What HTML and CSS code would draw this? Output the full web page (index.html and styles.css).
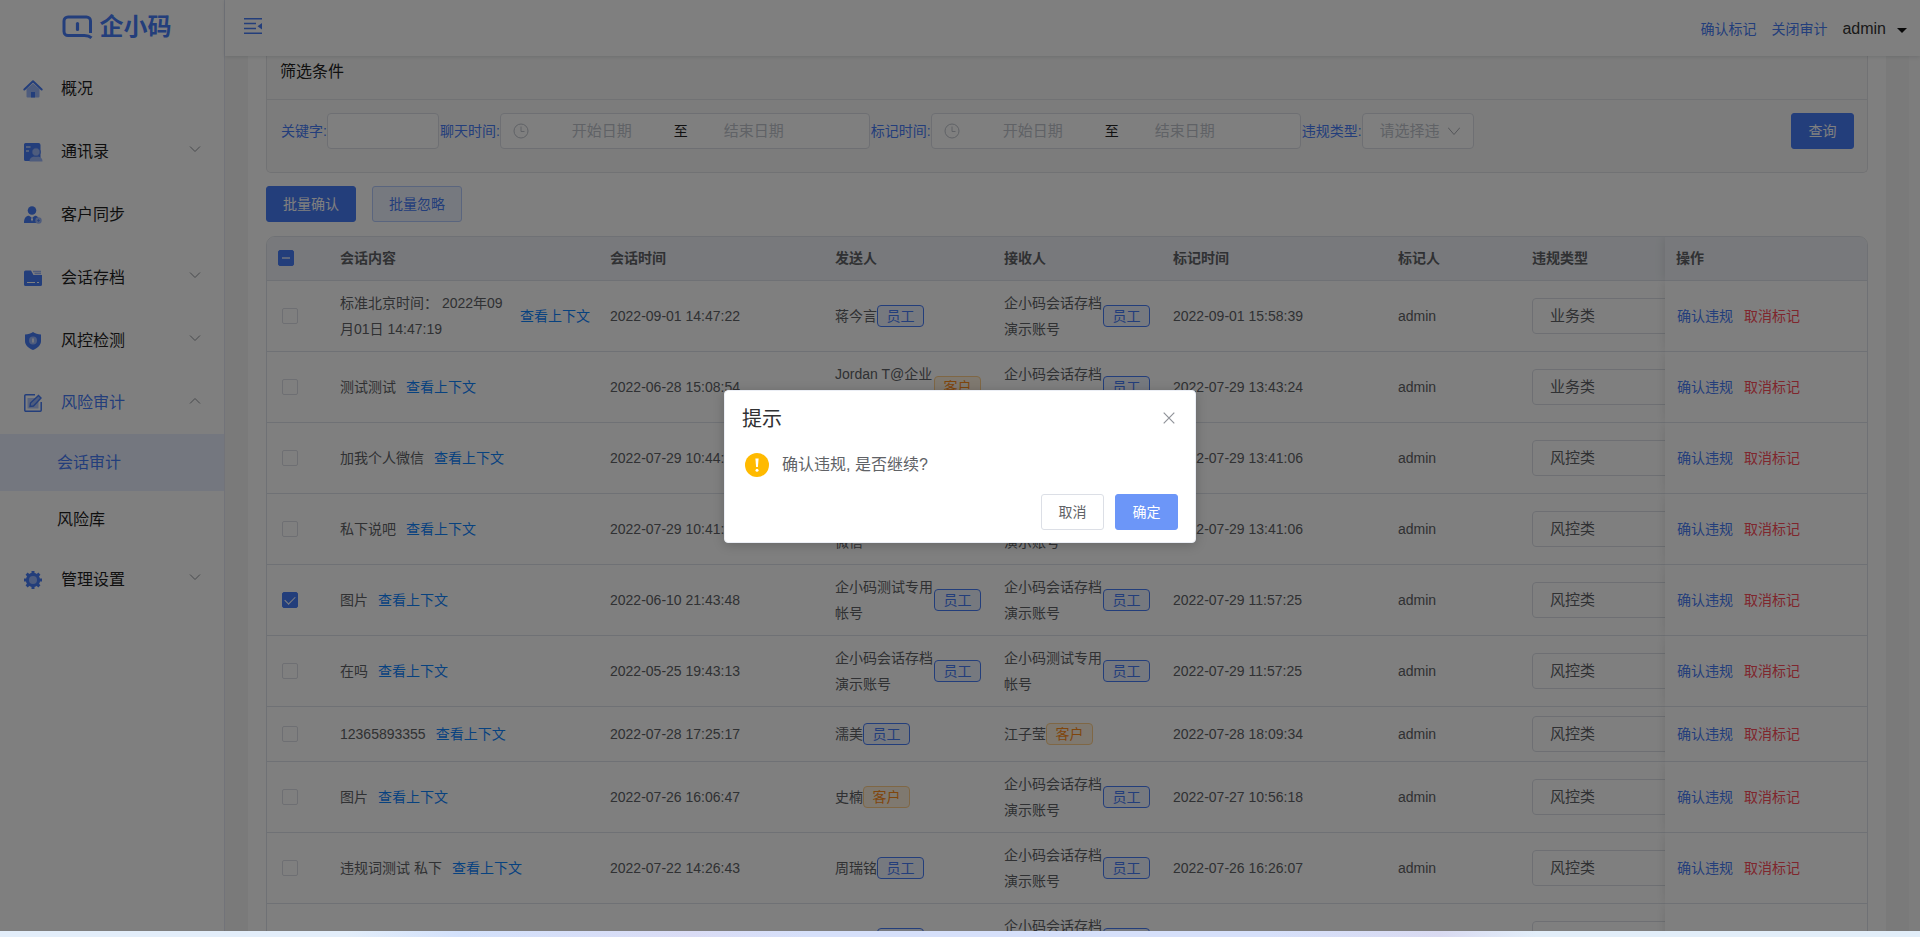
FILE: index.html
```html
<!DOCTYPE html>
<html lang="zh-CN">
<head>
<meta charset="utf-8">
<title>企小码 - 会话审计</title>
<link rel="stylesheet" href="styles.css">
</head>
<body>
<div class="app">
  <aside class="sidebar">
    <div class="logo">
      <svg class="logo-mark" width="31" height="24" viewBox="0 0 31 24" fill="none" stroke="currentColor" stroke-width="3"><path d="M29.500 22.800c-2-1.800-4-2.300-7-2.300H6a4 4 0 0 1-4-4V6a4 4 0 0 1 4-4h18.500a4 4 0 0 1 4 4v12"/><path d="M15.500 8.500v6" stroke-width="3.200" stroke-linecap="round"/></svg>
      <span class="logo-text">企小码</span>
    </div>
    <nav class="menu">
      <a class="menu-item" href="#">
        <svg class="icon" viewBox="0 0 18 18"><path d="M2.500 9L9 3.500 15.500 9v7.500a1 1 0 0 1-1 1h-11a1 1 0 0 1-1-1z" fill="#9db8fa"/><path d="M7 12h4v5.500H7z" fill="#477cf7"/><path d="M.3 9.500L9 1.200 17.700 9.500" fill="none" stroke="#477cf7" stroke-width="2" stroke-linecap="round" stroke-linejoin="round"/></svg>
        <span class="menu-label">概况</span>
      </a>
      <a class="menu-item" href="#">
        <svg class="icon" viewBox="0 0 18 18"><path d="M1.500 0h13a2 2 0 0 1 2 2v16h-15A1.500 1.500 0 0 1 0 16.500v-15A1.500 1.500 0 0 1 1.500 0z" fill="#477cf7"/><path d="M2 4h4.500M2 8h3" stroke="#fff" stroke-width="1.200"/><path d="M5.500 18.500c0-3.500 2-5 6.500-5s6.500 1.500 6.500 5z" fill="#9db8fa"/><circle cx="12" cy="9" r="4.200" fill="#9db8fa" stroke="#477cf7"/></svg>
        <span class="menu-label">通讯录</span>
        <svg class="chev" viewBox="0 0 12 12"><path d="M1 3.500l5 5 5-5"/></svg>
      </a>
      <a class="menu-item" href="#">
        <svg class="icon" viewBox="0 0 18 18"><circle cx="8" cy="4.500" r="4.300" fill="#477cf7"/><path d="M0 17c0-5 2-7.300 5-7.300l3 2 3-2c3 0 4 2.300 4 7.300z" fill="#477cf7"/><path d="M8 10.500l1 3-1 2-1-2z" fill="#fff"/><circle cx="14.500" cy="14.500" r="3.200" fill="#9db8fa"/><path d="M13 14.500h3M14.500 13v3" stroke="#477cf7" stroke-width=".7"/></svg>
        <span class="menu-label">客户同步</span>
      </a>
      <a class="menu-item" href="#">
        <svg class="icon" viewBox="0 0 18 18"><path d="M9 2.500h8M10.500 4.500H17" stroke="#9db8fa" stroke-width="1.600"/><path d="M0 3a1.500 1.500 0 0 1 1.500-1.500H7L9.500 6H18v9.500a1.500 1.500 0 0 1-1.500 1.500h-15A1.500 1.500 0 0 1 0 15.500z" fill="#477cf7"/><path d="M3 13.500h8M13 13.500h2" stroke="#fff" stroke-width="1.200"/></svg>
        <span class="menu-label">会话存档</span>
        <svg class="chev" viewBox="0 0 12 12"><path d="M1 3.500l5 5 5-5"/></svg>
      </a>
      <a class="menu-item" href="#">
        <svg class="icon" viewBox="0 0 18 18"><path d="M9 0c2 1.500 5 2.500 8 2.500V9c0 4-3 7-8 9-5-2-8-5-8-9V2.500C4 2.500 7 1.500 9 0z" fill="#477cf7"/><circle cx="9" cy="8.500" r="4" fill="#9db8fa"/><path d="M9 6.500v4" stroke="#fff" stroke-width="1.500"/></svg>
        <span class="menu-label">风控检测</span>
        <svg class="chev" viewBox="0 0 12 12"><path d="M1 3.500l5 5 5-5"/></svg>
      </a>
      <a class="menu-item open" href="#">
        <svg class="icon" viewBox="0 0 18 18"><path d="M3.500 4H11l3.500 4v6.500h-11z" fill="#b4c8fb"/><path d="M11 .8H1.800A1 1 0 0 0 .8 1.800v14.400a1 1 0 0 0 1 1h14.400a1 1 0 0 0 1-1V8" fill="none" stroke="#477cf7" stroke-width="1.500"/><path d="M6 12.500l.5-3.500 8-7.500 2.500 2.500-7.500 8z" fill="#9db8fa" stroke="#477cf7" stroke-width="1.400"/></svg>
        <span class="menu-label">风险审计</span>
        <svg class="chev" viewBox="0 0 12 12"><path d="M1 8.500l5-5 5 5"/></svg>
      </a>
      <a class="sub-item active" href="#">会话审计</a>
      <a class="sub-item" href="#">风险库</a>
      <a class="menu-item" href="#">
        <svg class="icon" viewBox="0 0 18 18"><circle cx="9" cy="9" r="7.200" fill="#477cf7"/><path d="M9 0v18M0 9h18M2.600 2.600l12.800 12.800M15.400 2.600L2.600 15.400" stroke="#477cf7" stroke-width="3"/><circle cx="9" cy="9" r="4" fill="#9db8fa"/></svg>
        <span class="menu-label">管理设置</span>
        <svg class="chev" viewBox="0 0 12 12"><path d="M1 3.500l5 5 5-5"/></svg>
      </a>
    </nav>
  </aside>

  <div class="content">
    <header class="topbar">
      <button class="fold" type="button" aria-label="收起菜单">
        <svg width="18" height="16" viewBox="0 0 18 16"><path d="M0 .8h18M0 5.600h12M0 10.400h12M0 15.200h18" stroke="currentColor" stroke-width="1.500"/><path d="M18 5v6.500l-4.500-3.200z" fill="currentColor"/></svg>
      </button>
      <div class="top-links">
        <a href="#">确认标记</a>
        <a href="#">关闭审计</a>
        <button class="user" type="button"><span>admin</span><svg width="10" height="5" viewBox="0 0 10 5"><path d="M0 0h10L5 5z" fill="currentColor"/></svg></button>
      </div>
    </header>

    <div class="scroller">
      <main class="card">
        <section class="filter">
          <h2 class="filter-title">筛选条件</h2>
          <form class="filter-row">
            <label class="flabel" for="kw">关键字:</label>
            <input class="box kw" id="kw" type="text">
            <label class="flabel next" for="c1">聊天时间:</label>
            <div class="box range">
              <svg class="clock" viewBox="0 0 16 16"><circle cx="8" cy="8" r="7"/><path d="M8 3.500V8.500h3.500"/></svg>
              <input id="c1" type="text" placeholder="开始日期"><span class="sep">至</span><input type="text" placeholder="结束日期" aria-label="结束日期">
            </div>
            <label class="flabel next" for="m1">标记时间:</label>
            <div class="box range">
              <svg class="clock" viewBox="0 0 16 16"><circle cx="8" cy="8" r="7"/><path d="M8 3.500V8.500h3.500"/></svg>
              <input id="m1" type="text" placeholder="开始日期"><span class="sep">至</span><input type="text" placeholder="结束日期" aria-label="结束日期">
            </div>
            <label class="flabel next" for="vt">违规类型:</label>
            <div class="box pick">
              <input id="vt" type="text" placeholder="请选择违规类型" readonly>
              <svg class="chev" viewBox="0 0 12 12"><path d="M0 2.500l6 7 6-7"/></svg>
            </div>
            <button class="btn primary query" type="button">查询</button>
          </form>
        </section>

        <div class="batch">
          <button class="btn primary" type="button">批量确认</button>
          <button class="btn plain" type="button">批量忽略</button>
        </div>

        <div class="table-wrap">
        <table class="table">
          <colgroup><col class="c-check"><col class="c-text"><col class="c-time"><col class="c-name"><col class="c-name"><col class="c-time"><col class="c-by"><col class="c-type"><col class="c-op"></colgroup>
          <thead><tr>
            <th class="hcheck"><input class="check partial" type="checkbox" aria-label="全选"></th>
            <th>会话内容</th><th>会话时间</th><th>发送人</th><th>接收人</th><th>标记时间</th><th>标记人</th><th>违规类型</th><th class="op">操作</th>
          </tr></thead>
          <tbody>
            <tr><td class="rcheck"><input class="check" type="checkbox" aria-label="选择"></td>
              <td><div class="talk"><span>标准北京时间： 2022年09月01日 14:47:19</span><a href="#">查看上下文</a></div></td><td>2022-09-01 14:47:22</td>
              <td><div class="who"><span>蒋今言</span><span class="tag">员工</span></div></td>
              <td><div class="who"><span>企小码会话存档演示账号</span><span class="tag">员工</span></div></td>
              <td>2022-09-01 15:58:39</td><td>admin</td><td><div class="clip"><select class="type" aria-label="违规类型"><option>业务类</option></select></div></td>
              <td class="op"><a href="#">确认违规</a><a class="red" href="#">取消标记</a></td></tr>
            <tr><td class="rcheck"><input class="check" type="checkbox" aria-label="选择"></td>
              <td><div class="talk"><span>测试测试</span><a href="#">查看上下文</a></div></td><td>2022-06-28 15:08:54</td>
              <td><div class="who"><span>Jordan T@企业微信</span><span class="tag guest">客户</span></div></td>
              <td><div class="who"><span>企小码会话存档演示账号</span><span class="tag">员工</span></div></td>
              <td>2022-07-29 13:43:24</td><td>admin</td><td><div class="clip"><select class="type" aria-label="违规类型"><option>业务类</option></select></div></td>
              <td class="op"><a href="#">确认违规</a><a class="red" href="#">取消标记</a></td></tr>
            <tr><td class="rcheck"><input class="check" type="checkbox" aria-label="选择"></td>
              <td><div class="talk"><span>加我个人微信</span><a href="#">查看上下文</a></div></td><td>2022-07-29 10:44:42</td>
              <td><div class="who"><span>Jordan T@企业微信</span><span class="tag guest">客户</span></div></td>
              <td><div class="who"><span>企小码会话存档演示账号</span><span class="tag">员工</span></div></td>
              <td>2022-07-29 13:41:06</td><td>admin</td><td><div class="clip"><select class="type" aria-label="违规类型"><option>风控类</option></select></div></td>
              <td class="op"><a href="#">确认违规</a><a class="red" href="#">取消标记</a></td></tr>
            <tr><td class="rcheck"><input class="check" type="checkbox" aria-label="选择"></td>
              <td><div class="talk"><span>私下说吧</span><a href="#">查看上下文</a></div></td><td>2022-07-29 10:41:52</td>
              <td><div class="who"><span>Jordan T@企业微信</span><span class="tag guest">客户</span></div></td>
              <td><div class="who"><span>企小码会话存档演示账号</span><span class="tag">员工</span></div></td>
              <td>2022-07-29 13:41:06</td><td>admin</td><td><div class="clip"><select class="type" aria-label="违规类型"><option>风控类</option></select></div></td>
              <td class="op"><a href="#">确认违规</a><a class="red" href="#">取消标记</a></td></tr>
            <tr><td class="rcheck"><input class="check" type="checkbox" aria-label="选择" checked></td>
              <td><div class="talk"><span>图片</span><a href="#">查看上下文</a></div></td><td>2022-06-10 21:43:48</td>
              <td><div class="who"><span>企小码测试专用帐号</span><span class="tag">员工</span></div></td>
              <td><div class="who"><span>企小码会话存档演示账号</span><span class="tag">员工</span></div></td>
              <td>2022-07-29 11:57:25</td><td>admin</td><td><div class="clip"><select class="type" aria-label="违规类型"><option>风控类</option></select></div></td>
              <td class="op"><a href="#">确认违规</a><a class="red" href="#">取消标记</a></td></tr>
            <tr><td class="rcheck"><input class="check" type="checkbox" aria-label="选择"></td>
              <td><div class="talk"><span>在吗</span><a href="#">查看上下文</a></div></td><td>2022-05-25 19:43:13</td>
              <td><div class="who"><span>企小码会话存档演示账号</span><span class="tag">员工</span></div></td>
              <td><div class="who"><span>企小码测试专用帐号</span><span class="tag">员工</span></div></td>
              <td>2022-07-29 11:57:25</td><td>admin</td><td><div class="clip"><select class="type" aria-label="违规类型"><option>风控类</option></select></div></td>
              <td class="op"><a href="#">确认违规</a><a class="red" href="#">取消标记</a></td></tr>
            <tr><td class="rcheck"><input class="check" type="checkbox" aria-label="选择"></td>
              <td><div class="talk"><span>12365893355</span><a href="#">查看上下文</a></div></td><td>2022-07-28 17:25:17</td>
              <td><div class="who"><span>濡美</span><span class="tag">员工</span></div></td>
              <td><div class="who"><span>江子莹</span><span class="tag guest">客户</span></div></td>
              <td>2022-07-28 18:09:34</td><td>admin</td><td><div class="clip"><select class="type" aria-label="违规类型"><option>风控类</option></select></div></td>
              <td class="op"><a href="#">确认违规</a><a class="red" href="#">取消标记</a></td></tr>
            <tr><td class="rcheck"><input class="check" type="checkbox" aria-label="选择"></td>
              <td><div class="talk"><span>图片</span><a href="#">查看上下文</a></div></td><td>2022-07-26 16:06:47</td>
              <td><div class="who"><span>史楠</span><span class="tag guest">客户</span></div></td>
              <td><div class="who"><span>企小码会话存档演示账号</span><span class="tag">员工</span></div></td>
              <td>2022-07-27 10:56:18</td><td>admin</td><td><div class="clip"><select class="type" aria-label="违规类型"><option>风控类</option></select></div></td>
              <td class="op"><a href="#">确认违规</a><a class="red" href="#">取消标记</a></td></tr>
            <tr><td class="rcheck"><input class="check" type="checkbox" aria-label="选择"></td>
              <td><div class="talk"><span>违规词测试 私下</span><a href="#">查看上下文</a></div></td><td>2022-07-22 14:26:43</td>
              <td><div class="who"><span>周瑞铭</span><span class="tag">员工</span></div></td>
              <td><div class="who"><span>企小码会话存档演示账号</span><span class="tag">员工</span></div></td>
              <td>2022-07-26 16:26:07</td><td>admin</td><td><div class="clip"><select class="type" aria-label="违规类型"><option>风控类</option></select></div></td>
              <td class="op"><a href="#">确认违规</a><a class="red" href="#">取消标记</a></td></tr>
            <tr><td class="rcheck"></td><td></td><td></td>
              <td><div class="who"><span>周瑞铭</span><span class="tag">员工</span></div></td>
              <td><div class="who"><span>企小码会话存档演示账号</span><span class="tag">员工</span></div></td>
              <td></td><td></td><td><div class="clip"><select class="type" aria-label="违规类型"><option>风控类</option></select></div></td>
              <td class="op"></td></tr>
          </tbody>
        </table>
        </div>
      </main>
      <div class="track"></div>
    </div>
  </div>

  <div class="overlay">
    <div class="dialog" role="dialog" aria-labelledby="dlg-title">
      <div class="dialog-head">
        <h1 id="dlg-title">提示</h1>
        <button class="close" type="button" aria-label="关闭"><svg width="12" height="12" viewBox="0 0 12 12"><path d="M.7.7l10.600 10.600M11.300.7L.7 11.300" stroke="currentColor" stroke-width="1.200"/></svg></button>
      </div>
      <div class="dialog-body">
        <svg class="warn" width="24" height="24" viewBox="0 0 24 24"><circle cx="12" cy="12" r="12" fill="#ffba00"/><path d="M10.400 5.500h3.200l-.7 8.500h-1.800z" fill="#fff"/><circle cx="12" cy="17.200" r="1.500" fill="#fff"/></svg>
        <p>确认违规, 是否继续?</p>
      </div>
      <div class="dialog-foot">
        <button class="btn" type="button">取消</button>
        <button class="btn primary hover" type="button">确定</button>
      </div>
    </div>
  </div>
</div>
<div class="backdrop"></div>
</body>
</html>
```
FILE: styles.css
```css
* { box-sizing: border-box; }
body {
  margin: 0;
  height: 100vh;
  display: flex;
  flex-direction: column;
  overflow: hidden;
  font: 14px/26px "Liberation Sans", "Noto Sans CJK SC", sans-serif;
  color: #606266;
}
a { color: #477cf7; text-decoration: none; }
input, button, select { font: inherit; color: inherit; margin: 0; }
button { cursor: pointer; }

.app { position: relative; flex: 1; min-height: 0; display: flex; background: #fff; }
.backdrop {
  height: 6px;
  background: linear-gradient(90deg, #e3eefa 0%, #e3eefa 18%, #d3e1fb 24%, #dadcf5 36%, #d6e0fa 42%, #d6e0fa 66%, #d9daf1 75%, #e2eef9 80%, #e2eef9 100%);
}

/* sidebar */
.sidebar { width: 225px; flex: none; border-right: 1px solid #e4e7f2; }
.logo { height: 57px; display: flex; align-items: center; justify-content: center; gap: 7px; padding-left: 9px; padding-bottom: 3px; color: #477cf7; }
.logo-text { font-size: 24px; font-weight: 700; }
.menu { display: flex; flex-direction: column; }
.menu-item { height: 63px; display: flex; align-items: center; padding: 0 24px; color: #1f1f1f; font-size: 16px; }
.icon { width: 18px; height: 18px; margin-right: 19px; overflow: visible; }
.menu-label { flex: 1; }
.menu-item.open, .sub-item.active { color: #477cf7; }
.chev { width: 12px; height: 12px; fill: none; stroke: #909399; stroke-width: 1; }
.menu .chev { margin: 0 -1px 5px 0; }
.menu-item.open { height: 62px; }
.sub-item { height: 57px; padding-left: 57px; line-height: 57px; font-size: 16px; color: #1f1f1f; }
.sub-item.active { background: #e9eefe; }

/* top bar */
.content { flex: 1; min-width: 0; display: flex; flex-direction: column; }
.topbar { height: 56px; flex: none; display: flex; align-items: center; justify-content: space-between; padding: 0 13px 0 19px; background: #fff; box-shadow: 0 1px 4px rgba(0, 21, 41, .12); z-index: 1; }
.fold { border: 0; padding: 0; background: none; color: #477cf7; display: flex; margin-bottom: 4px; }
.top-links { display: flex; align-items: center; gap: 15px; padding-top: 2px; }
.user { border: 0; padding: 0; background: none; display: flex; align-items: center; gap: 11px; font-size: 16px; color: #333; }
.user svg { color: #111; margin-top: 3px; }

/* page */
.scroller { flex: 1; min-height: 0; display: flex; background: #f5f5f5; overflow: hidden; }
.card { flex: 1; min-width: 0; margin: 0 23px; padding: 0 18px; background: #fff; overflow: hidden; }
.track { width: 11px; background: #fafafa; }

.filter { border: 1px solid #e3e4e8; border-top: 0; border-radius: 0 0 5px 5px; background: #f9f9f9; }
.filter-title { margin: 0; padding: 4px 13px 15px; border-bottom: 1px solid #e3e4e8; font-size: 16px; line-height: 24px; font-weight: 400; color: #222; }
.filter-row { display: flex; align-items: center; padding: 13px 13px 23px 14px; }
.flabel { color: #477cf7; white-space: nowrap; }
.flabel.next { margin-left: 1px; }
.box { height: 36px; border: 1px solid #dcdfe6; border-radius: 4px; background: #fff; }
.kw { width: 112px; padding: 0 10px; }
.range { width: 370px; display: flex; align-items: center; padding-left: 12px; }
.range input { width: 126px; border: 0; padding: 0; background: none; text-align: center; font-size: 15px; }
.clock { width: 16px; height: 16px; margin-right: 10px; fill: none; stroke: #c0c4cc; }
.sep { width: 26px; padding-left: 6px; text-align: center; color: #222; }
.pick { width: 112px; display: flex; align-items: center; padding: 0 13px 0 17px; }
.pick input { flex: 1; width: 0; border: 0; padding: 0; margin-right: 8px; background: none; font-size: 15px; }
.pick .chev { stroke: #a8abb2; }
input::placeholder { color: #c0c4cc; }

.btn { min-width: 63px; height: 36px; padding: 0 16px; border: 1px solid #dcdfe6; border-radius: 3px; background: #fff; line-height: 34px; }
.btn.primary { background: #477cf7; border-color: #477cf7; color: #fff; }
.btn.plain { background: #edf2fe; border-color: #b5cbfc; color: #477cf7; }
.btn.primary.hover { background: #6c96f8; border-color: #6c96f8; }
.query { margin-left: auto; }
.batch { display: flex; gap: 16px; margin: 13px 0 14px; }

/* table */
.table-wrap { border: 1px solid #dfe3ea; border-radius: 9px 9px 0 0; overflow: hidden; }
.table { width: 100%; table-layout: fixed; border-collapse: separate; border-spacing: 0; }
.c-check { width: 63px; } .c-text { width: 270px; } .c-time { width: 225px; }
.c-name { width: 169px; } .c-by { width: 134px; } .c-type { width: 143px; } .c-op { width: 204px; }
.table th, .table td { padding: 9px 10px; border-bottom: 1px solid #dfe3ea; text-align: left; }
.table th { padding: 8px 10px 9px; background: #f0f3f8; font-weight: 700; }
.table .hcheck { padding-left: 11px; }
.table .rcheck { padding-left: 15px; }
.table td:nth-child(8), .table th:nth-child(8) { padding-right: 0; }
.check { appearance: none; display: block; width: 16px; height: 16px; border: 1px solid #dcdfe6; border-radius: 2px; background: #fff; }
.check:checked, .check.partial { background: #477cf7; border-color: #477cf7; display: grid; place-items: center; }
.check:checked::after { content: ""; width: 9px; height: 5px; border: solid #fff; border-width: 0 0 1px 1px; transform: rotate(-45deg); margin-bottom: 3px; }
.check.partial::after { content: ""; width: 8px; height: 2px; background: #b9cdfb; }
.talk { display: flex; align-items: center; gap: 10px; word-break: break-all; }
.talk a { flex: none; color: #0f84ff; }
.who { display: flex; align-items: center; max-width: 146px; word-break: break-all; }
.tag { flex: none; width: 47px; height: 22px; border: 1px solid #477cf7; border-radius: 4px; background: #edf2fe; color: #477cf7; text-align: center; line-height: 20px; }
.tag.guest { border-color: #ffcf8a; background: #fff3e0; color: #ff8c1a; }
.clip { overflow: hidden; display: flex; }
.type { appearance: none; flex: none; width: 180px; height: 36px; padding: 0 17px; border: 1px solid #dcdfe6; border-radius: 4px; background: #fff; font-size: 15px; }
.table .op { position: relative; box-shadow: 0 0 10px rgba(0, 0, 0, .12); background: #fff; padding-left: 12px; clip-path: inset(0 0 0 -14px); }
.table th.op { background: #f0f3f8; padding-left: 11px; }
.op .red { margin-left: 11px; color: #ff4d5a; }

/* dialog */
.overlay { position: absolute; inset: 0; z-index: 10; display: flex; align-items: center; justify-content: center; padding-top: 2px; background: rgba(0, 0, 0, .5); }
.dialog { width: 472px; padding: 15px 17px 12px; border: 1px solid #ebeef5; border-radius: 4px; background: #fff; box-shadow: 0 2px 12px rgba(0, 0, 0, .2); }
.dialog-head { display: flex; align-items: center; justify-content: space-between; }
.dialog-head h1 { margin: 0; font-size: 20px; line-height: 26px; font-weight: 400; color: #303133; }
.close { border: 0; padding: 0 3px 2px 0; background: none; color: #909399; display: flex; }
.dialog-body { display: flex; align-items: center; gap: 13px; padding: 20px 3px 16px; }
.dialog-body p { margin: 0; font-size: 16px; line-height: 26px; }
.dialog-foot { display: flex; justify-content: flex-end; gap: 11px; }
```
